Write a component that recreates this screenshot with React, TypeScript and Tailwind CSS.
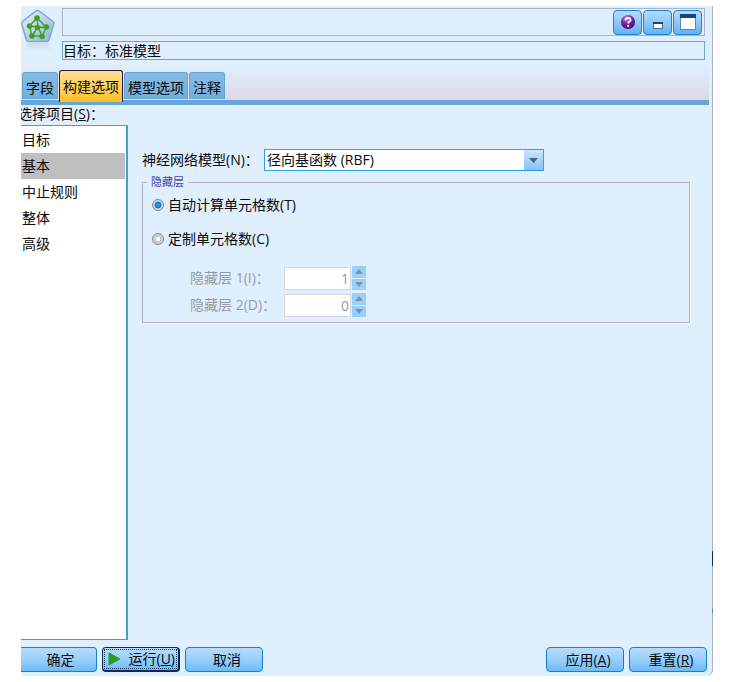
import React, { useState } from 'react';
import clsx from 'clsx';

const TABS = ['字段', '构建选项', '模型选项', '注释'];
const SECTIONS = ['目标', '基本', '中止规则', '整体', '高级'];

const FONT = 'font-["Open_Sans","Noto_Sans_CJK_SC",sans-serif]';

const NetworkIcon: React.FC = () => (
  <svg width="34" height="44" viewBox="0 0 34 44" aria-hidden="true">
    <defs>
      <linearGradient id="pentagon" x1="0" y1="0" x2="1" y2="1">
        <stop offset="0" stopColor="#eef5fc" />
        <stop offset="0.5" stopColor="#bcd2e9" />
        <stop offset="1" stopColor="#8db1d8" />
      </linearGradient>
      <linearGradient id="reflection" x1="0" y1="0" x2="0" y2="1">
        <stop offset="0" stopColor="#bdd1e6" />
        <stop offset="1" stopColor="#e0effd" />
      </linearGradient>
    </defs>
    <path d="M7 34h20l4 8H3z" fill="url(#reflection)" opacity="0.6" />
    <path
      d="M15 1.800Q16.500 1 18 1.800L32 12.500Q33.300 13.500 32.800 15L28 31Q27.500 32.500 26 32.500H7.500Q6 32.500 5.500 31L.8 15Q.3 13.500 1.500 12.500Z"
      fill="url(#pentagon)"
      stroke="#7fa6d2"
      strokeWidth="1.500"
    />
    <path
      d="M16 9L8.500 17L11 27H21L25.500 18.500L16 9L17 18L8.500 17M17 18L11 27M17 18L25.500 18.500M17 18L21 27"
      stroke="#4f9433"
      strokeWidth="1.400"
      fill="none"
    />
    <g fill="#36a51c">
      <circle cx="16" cy="9" r="2.800" />
      <circle cx="8.500" cy="17" r="2.800" />
      <circle cx="16.500" cy="18.500" r="2.800" />
      <circle cx="25.500" cy="18" r="2.800" />
      <circle cx="11" cy="27" r="2.800" />
      <circle cx="21" cy="27.500" r="2.800" />
    </g>
  </svg>
);

const HelpIcon: React.FC = () => (
  <svg width="16" height="16" viewBox="0 0 16 16" aria-hidden="true">
    <defs>
      <radialGradient id="help" cx="0.4" cy="0.25" r="0.8">
        <stop offset="0" stopColor="#c79be0" />
        <stop offset="0.45" stopColor="#7c22a8" />
        <stop offset="1" stopColor="#45006e" />
      </radialGradient>
    </defs>
    <circle cx="8" cy="8" r="7" fill="url(#help)" />
    <path d="M5.500 6.200Q5.700 3.800 8.200 3.800Q10.700 3.900 10.600 6Q10.500 7.200 9.200 7.900Q8.200 8.400 8.200 9.600" fill="none" stroke="#fff" strokeWidth="1.800" />
    <circle cx="8.200" cy="11.900" r="1.100" fill="#fff" />
  </svg>
);

const MinimizeIcon: React.FC = () => (
  <svg width="16" height="16" viewBox="0 0 16 16" aria-hidden="true">
    <rect x="3.500" y="8.500" width="9" height="6" fill="#fff" stroke="#55708c" />
    <path d="M3 9h10" stroke="#1d4672" strokeWidth="2" />
  </svg>
);

const MaximizeIcon: React.FC = () => (
  <svg width="16" height="16" viewBox="0 0 16 16" aria-hidden="true">
    <rect x="0.500" y="0.500" width="15" height="15" fill="#fff" stroke="#5b86ad" />
    <path d="M0 2h16" stroke="#154778" strokeWidth="4" />
  </svg>
);

const WindowButton: React.FC<{ label: string; children: React.ReactNode }> = ({ label, children }) => (
  <button
    type="button"
    aria-label={label}
    className="flex h-[25px] w-[29px] items-center justify-center rounded-[4px] border border-[#1e84d4] bg-linear-to-b from-[#b4dafc] via-[#8fc8fa] to-[#5db3f6]"
  >
    {children}
  </button>
);

type ActionButtonProps = { children: React.ReactNode; className?: string };

const ActionButton: React.FC<ActionButtonProps> = ({ children, className }) => (
  <button
    type="button"
    className={clsx(
      'flex h-[25px] items-center justify-center whitespace-nowrap bg-linear-to-b from-[#b8dcfd] via-[#98cffc] to-[#6bbcf9]',
      className ?? 'w-[78px] rounded-[4px] border border-[#1580d0] pl-[6px]',
    )}
  >
    {children}
  </button>
);

type SpinnerProps = { id: string; label: string; value: number };

const Spinner: React.FC<SpinnerProps> = ({ id, label, value }) => (
  <div className="flex h-6 items-center text-[#989ca2]">
    <label htmlFor={id} className="w-[94px] whitespace-nowrap">{label}</label>
    <input
      id={id}
      type="text"
      disabled
      defaultValue={value}
      className="h-[23px] w-[67px] border border-[#d2d8df] bg-white pr-px text-right"
    />
    <div className="ml-px flex h-6 w-[14px] flex-col gap-px">
      <button type="button" disabled aria-label={`${label} +`} className="flex flex-1 items-center justify-center bg-[#99cffd]">
        <svg width="8" height="5" viewBox="0 0 8 5"><path d="M4 0l4 5H0z" fill="#7d93a8" /></svg>
      </button>
      <button type="button" disabled aria-label={`${label} -`} className="flex flex-1 items-center justify-center bg-[#99cffd]">
        <svg width="8" height="5" viewBox="0 0 8 5"><path d="M0 0h8L4 5z" fill="#7d93a8" /></svg>
      </button>
    </div>
  </div>
);

type RadioProps = { label: string; checked: boolean; onChange: () => void };

const Radio: React.FC<RadioProps> = ({ label, checked, onChange }) => (
  <label className="flex h-5 items-center gap-1">
    <input
      type="radio"
      name="units"
      checked={checked}
      onChange={onChange}
      className="h-3 w-3 appearance-none rounded-full border border-[#7f8b94] bg-[radial-gradient(circle,#fff_0,#fff_30%,#8fb5c8_42%,#d5d7d4_55%)] checked:bg-[radial-gradient(circle,#45a9f2_0,#0e6fca_42%,#d5d7d4_54%)]"
    />
    {label}
  </label>
);

const App: React.FC = () => {
  const [tab, setTab] = useState('构建选项');
  const [section, setSection] = useState('基本');
  const [auto, setAuto] = useState(true);

  return (
    <div className={clsx('flex min-h-screen bg-white py-[6px] pl-[21px] pr-[43px] text-[14px] leading-5 text-[#0a0a0a]', FONT)}>
      <div className="relative flex flex-1 flex-col rounded-br-[6px] border-r border-[#adb1bf] bg-[#e0effd]">

        {/* Title area */}
        <header className="flex pr-[7px] pt-[2px]">
          <div className="w-[41px] shrink-0 pt-px">
            <NetworkIcon />
          </div>
          <div className="flex flex-1 flex-col gap-[5px]">
            <div className="flex h-7 items-center justify-end gap-px border border-[#b0b5c1] pr-[2px]">
              <WindowButton label="帮助"><HelpIcon /></WindowButton>
              <WindowButton label="最小化"><MinimizeIcon /></WindowButton>
              <WindowButton label="最大化"><MaximizeIcon /></WindowButton>
            </div>
            <div className="flex h-[19px] items-center border border-[#6ca6d6]">目标：标准模型</div>
          </div>
        </header>

        {/* Tabs */}
        <nav className="mr-[3px] mt-1 flex h-[41px] items-end gap-px border-b-[5px] border-[#66a6dc] bg-linear-to-b from-[#e0effd] to-[#dcd9e5] pl-px">
          {TABS.map((t) => (
            <button
              key={t}
              type="button"
              onClick={() => setTab(t)}
              className={clsx(
                'rounded-t-[3px] border border-b-0 px-[3px]',
                t === tab
                  ? '-mb-[2px] h-8 border-[#2b1745] bg-linear-to-b from-[#ffdf8c] to-[#ffbf0c]'
                  : 'mb-px h-[27px] border-[#65a4d3] bg-linear-to-b from-[#83bbe4] to-[#71afe0] pt-1',
              )}
            >
              {t}
            </button>
          ))}
        </nav>

        {/* Section list and form */}
        <div className="flex flex-1">
          <aside className="flex w-[107px] shrink-0 flex-col">
            <p className="h-5 overflow-hidden whitespace-nowrap -indent-[3px] leading-[18px]">
              选择项目(<u>S</u>)：
            </p>
            <ul className="flex-1 border-b border-r-2 border-t border-[#4b9cc6] bg-white pr-px pt-px">
              {SECTIONS.map((s) => (
                <li key={s}>
                  <button
                    type="button"
                    onClick={() => setSection(s)}
                    className={clsx('h-[26px] w-full pl-px text-left', s === section && 'bg-[#bfbfbf]')}
                  >
                    {s}
                  </button>
                </li>
              ))}
            </ul>
          </aside>

          <main className="flex-1 pl-[14px] pr-[22px] pt-11">
            <div className="flex items-center">
              <label htmlFor="model" className="w-[122px] whitespace-nowrap">神经网络模型(N)：</label>
              <div className="relative w-[280px]">
                <select
                  id="model"
                  className="h-[22px] w-full appearance-none border border-[#2da4e2] bg-white pl-[2px]"
                >
                  <option>径向基函数 (RBF)</option>
                  <option>多层感知器 (MLP)</option>
                </select>
                <span className="pointer-events-none absolute inset-y-px right-px flex w-[19px] items-center justify-center bg-linear-to-b from-[#cbe5fd] to-[#80c3f8]">
                  <svg width="9" height="5" viewBox="0 0 9 5"><path d="M0 0h9L4.500 5z" fill="#5b6065" /></svg>
                </span>
              </div>
            </div>

            <fieldset className="mt-[3px] border border-[#b0b3bf] px-[9px] pb-[5px] shadow-[1px_1px_0_#fff]">
              <legend className="-ml-[5px] px-1 text-[11px] leading-4 text-[#3c46a6]">隐藏层</legend>
              <div className="flex flex-col gap-[14px] pt-[5px]">
                <Radio label="自动计算单元格数(T)" checked={auto} onChange={() => setAuto(true)} />
                <Radio label="定制单元格数(C)" checked={!auto} onChange={() => setAuto(false)} />
              </div>
              <div className="mt-[17px] flex flex-col gap-[3px] pl-[38px]">
                <Spinner id="layer1" label="隐藏层 1(I)：" value={1} />
                <Spinner id="layer2" label="隐藏层 2(D)：" value={0} />
              </div>
            </fieldset>
          </main>
        </div>

        {/* Actions */}
        <footer className="flex gap-[5px] pb-1 pr-[5px] pt-[7px]">
          <ActionButton className="w-[76px] rounded-r-[4px] border border-l-0 border-[#1580d0] pl-1">确定</ActionButton>
          <ActionButton className="w-[78px] rounded-[4px] border border-b-2 border-r-2 border-[#0b2a55] p-px">
            <span className="flex h-full w-full items-center justify-between border border-dotted border-[#17365c] pl-[3px] pr-px">
              <svg width="13" height="14" viewBox="0 0 13 14" className="shrink-0" aria-hidden="true">
                <path d="M1 1l11 6L1 13z" fill="#21a01c" stroke="#3d8d3b" />
              </svg>
              <span>运行(<u>U</u>)</span>
            </span>
          </ActionButton>
          <ActionButton>取消</ActionButton>
          <div className="flex-1" />
          <ActionButton>应用(<u>A</u>)</ActionButton>
          <ActionButton>重置(<u>R</u>)</ActionButton>
        </footer>

        {/* Resize marks on the window edge */}
        <span className="absolute -right-px bottom-[110px] h-[15px] w-px bg-[#14254f]" />
        <span className="absolute -right-px bottom-[63px] h-1 w-px bg-[#4f86a8]" />
      </div>
    </div>
  );
};

export default App;
